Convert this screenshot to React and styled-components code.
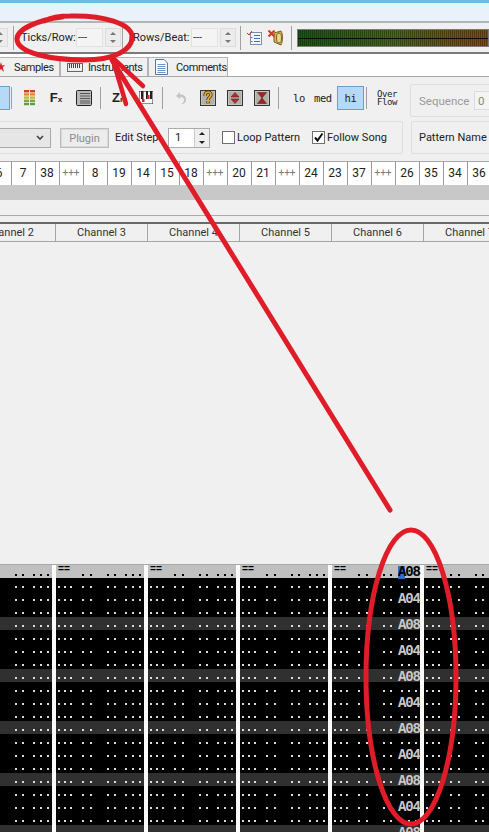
import React from "react";
import styled, { createGlobalStyle } from "styled-components";

const GlobalStyle = createGlobalStyle`
  html, body { margin: 0; padding: 0; background: #f0f0f0; }
  * { box-sizing: border-box; }
`;

const ORDERS = ["6", "7", "38", "+++", "8", "19", "14", "15", "18", "+++", "20", "21", "+++", "24", "23", "37", "+++", "26", "35", "34", "36"];
const CHANNELS = [2, 3, 4, 5, 6, 7];
const ROWS = Array.from({ length: 20 }, (_, i) => i);

const Page = styled.div`
  position: relative;
  width: 489px;
  height: 832px;
  overflow: hidden;
  display: flex;
  flex-direction: column;
  background: #f0f0f0;
  color: #222;
  font-family: Roboto, "Liberation Sans", Arial, sans-serif;
  font-size: 11px;
`;
const TitleStrip = styled.div`
  height: 23px;
  flex: none;
  background: #e9f2fa;
  border-top: 3px solid #6db9e8;
  border-bottom: 2px solid #b4b4b4;
`;
const TopBar = styled.div`
  height: 31px;
  flex: none;
  display: flex;
  align-items: center;
  background: #f0f0f0;
  border-bottom: 2px solid #7a7a7a;
`;
const Sep = styled.div`
  width: 1px;
  height: ${(p) => p.$h || 24}px;
  flex: none;
  margin-left: ${(p) => p.$ml || 0}px;
  background: #a0a0a0;
`;
const Label = styled.div`
  flex: none;
  width: ${(p) => (p.$w ? `${p.$w}px` : "auto")};
  white-space: nowrap;
  margin-left: ${(p) => p.$ml || 0}px;
  color: ${(p) => p.$color || "#222"};
`;
const Field = styled.div`
  width: 27px;
  height: 19px;
  flex: none;
  margin-left: ${(p) => p.$ml || 0}px;
  padding-left: 1px;
  line-height: 18px;
  background: #f4f4f4;
  border: 1px solid #e2e2e2;
  color: #333;
  font-size: 11px;
`;
const Spin = styled.div`
  width: 16px;
  height: 19px;
  flex: none;
  margin-left: ${(p) => p.$ml || 0}px;
  display: flex;
  flex-direction: column;
  justify-content: space-around;
  align-items: center;
  background: #ececec;
  border: 1px solid #dcdcdc;
`;
const Tri = styled.div`
  width: 0;
  height: 0;
  border-left: 3px solid transparent;
  border-right: 3px solid transparent;
  ${(p) => (p.$down ? "border-top: 3px solid #777;" : "border-bottom: 3px solid #777;")}
`;
const Meter = styled.div`
  width: 192px;
  height: 18px;
  flex: none;
  margin-left: 5px;
  background:
    linear-gradient(#0a0a0a, #0a0a0a) 0 8px / 100% 1px no-repeat,
    repeating-linear-gradient(90deg, rgba(0, 0, 0, 0.3) 0 1px, transparent 1px 2px),
    linear-gradient(90deg, #1c5416 0%, #4a661c 50%, #7a4c16 100%);
  border: 1px solid #7c7c7c;
`;
const TabStrip = styled.div`
  height: 23px;
  flex: none;
  display: flex;
  align-items: flex-end;
  margin-left: -10px;
  background: #fff;
  border-bottom: 1px solid #a8a8a8;
`;
const Tab = styled.div`
  height: 19px;
  width: ${(p) => p.$w}px;
  flex: none;
  display: flex;
  align-items: center;
  gap: ${(p) => p.$gap}px;
  padding-left: ${(p) => p.$pl}px;
  background: #f0f0f0;
  border: 1px solid #b4b4b4;
  border-bottom: none;
  white-space: nowrap;
  letter-spacing: -0.4px;
  & svg { flex: none; }
`;
const IconRow = styled.div`
  height: 41px;
  flex: none;
  display: flex;
  align-items: center;
`;
const ActiveStub = styled.div`
  width: 10px;
  height: 24px;
  flex: none;
  background: #b7d8f6;
  border: 1px solid #6c9fcf;
  border-left: none;
`;
const Slot = styled.div`
  flex: none;
  display: flex;
  justify-content: center;
  align-items: center;
  width: ${(p) => p.$w}px;
  margin-left: ${(p) => p.$ml || 0}px;
`;
const FxText = styled.div`
  font: bold 13px "Liberation Sans", Arial, sans-serif;
  color: #222;
  white-space: nowrap;
  & small { font-size: 8px; }
`;
const ModeText = styled.div`
  flex: none;
  width: ${(p) => p.$w}px;
  margin-left: ${(p) => p.$ml || 0}px;
  font: 10.500px "DejaVu Sans Mono", monospace;
  letter-spacing: -0.4px;
  color: #222;
`;
const ModeOn = styled(ModeText)`
  height: 24px;
  line-height: 22px;
  text-align: center;
  background: #b7d8f6;
  border: 1px solid #6c9fcf;
`;
const OverFlow = styled.div`
  flex: none;
  width: 20px;
  margin-left: 10px;
  font: 9px/8px "DejaVu Sans Mono", monospace;
  letter-spacing: -0.4px;
  color: #222;
`;
const GroupBox = styled.div`
  flex: none;
  height: 33px;
  display: flex;
  align-items: center;
  border: 1px solid #dedede;
  border-radius: 2px;
  overflow: hidden;
`;
const SequenceBox = styled(GroupBox)`
  width: 90px;
  margin-left: 13px;
  padding-left: 8px;
  align-self: flex-end;
  margin-bottom: 1px;
  font-size: 11.500px;
`;
const SeqValue = styled.div`
  width: 20px;
  height: 19px;
  flex: none;
  margin-left: 9px;
  padding-left: 3px;
  line-height: 18px;
  color: #888;
  background: #f4f4f4;
  border: 1px solid #dcdcdc;
`;
const PatternRow = styled.div`
  height: 39px;
  flex: none;
  display: flex;
  align-items: center;
  gap: 8px;
  margin-left: -6px;
`;
const SettingsBox = styled(GroupBox)`
  width: 409px;
  padding-left: 5px;
`;
const NameBox = styled(GroupBox)`
  width: 90px;
  padding-left: 7px;
`;
const Select = styled.div`
  width: 51px;
  height: 20px;
  flex: none;
  display: flex;
  justify-content: flex-end;
  align-items: center;
  padding-right: 6px;
  background: #e6e6e6;
  border: 1px solid #a9a9a9;
  border-left: none;
`;
const PluginButton = styled.div`
  width: 49px;
  height: 20px;
  flex: none;
  margin-left: 9px;
  line-height: 18px;
  text-align: center;
  color: #8c8c8c;
  background: #ececec;
  border: 2px solid #d9d9d9;
  outline: 1px solid #bdbdbd;
  outline-offset: -1px;
`;
const StepBox = styled.div`
  width: 42px;
  height: 20px;
  flex: none;
  margin-left: 10px;
  display: flex;
  align-items: center;
  justify-content: space-between;
  padding-left: 6px;
  background: #fff;
  border: 1px solid #acacac;
`;
const StepSpin = styled.div`
  width: 15px;
  height: 18px;
  display: flex;
  flex-direction: column;
  justify-content: space-around;
  align-items: center;
  background: #eee;
  border-left: 1px solid #ccc;
`;
const DarkTri = styled(Tri)`
  border-bottom-color: #222;
  border-top-color: #222;
`;
const CheckBox = styled.div`
  width: 13px;
  height: 13px;
  flex: none;
  display: flex;
  margin-left: ${(p) => p.$ml}px;
  background: #fff;
  border: 1px solid #707070;
`;
const OrderBar = styled.div`
  height: 24px;
  flex: none;
  display: flex;
  margin: 4px 0 0 -12px;
  background: #fff;
  border-top: 1px solid #a8a8a8;
`;
const OrderCell = styled.div`
  width: 24px;
  flex: none;
  padding-right: 1px;
  text-align: center;
  line-height: 22px;
  font-size: ${(p) => (p.$sep ? 10 : 12)}px;
  color: ${(p) => (p.$sep ? "#777" : "#222")};
  border-right: 1px solid #9a9a9a;
`;
const OrderScroll = styled.div`
  height: 15px;
  flex: none;
  background: #c8c8c8;
`;
const Divider = styled.div`
  height: 9px;
  flex: none;
  margin-top: 15px;
  border-top: 1px solid #acacac;
  border-bottom: 2px solid #696969;
`;
const ChannelBar = styled.div`
  height: 18px;
  flex: none;
  display: flex;
  margin-left: -36px;
`;
const ChannelButton = styled.div`
  width: 92px;
  flex: none;
  text-align: center;
  line-height: 17px;
  color: #333;
  background: #f0f0f0;
  border-right: 1px solid #a5a5a5;
  border-bottom: 1px solid #a5a5a5;
`;
const Blank = styled.div`
  flex: 1;
`;
const Tracker = styled.div`
  height: 268px;
  flex: none;
  display: flex;
  margin-left: -36px;
  border-top: 1px solid #a8a8a8;
  background: #000;
`;
const Channel = styled.div`
  width: 92px;
  flex: none;
  border-right: 4px solid #fbfbfb;
  box-shadow: inset -1px 0 0 #bbb;
`;
const Row = styled.div`
  height: 13px;
  display: grid;
  grid-template-columns: 24px 25px 18px 1fr;
  padding: ${(p) => (p.$head ? 9 : 8)}px 0 0 2px;
  background: ${(p) => (p.$head ? "#c0c0c0" : p.$light ? "#303030" : "#000")};
  color: ${(p) => (p.$head ? "#000" : "#dcdcdc")};
`;
const DotGroup = styled.div`
  display: flex;
  gap: ${(p) => p.$gap}px;
  height: 2px;
`;
const Dot = styled.span`
  width: 2px;
  height: 2px;
  flex: none;
  background: currentColor;
`;
const HeadMark = styled.div`
  font: bold 10px/10px "Liberation Mono", monospace;
  height: 2px;
  margin-top: -9px;
  color: #000;
`;
const EffectText = styled.div`
  height: 13px;
  margin: ${(p) => (p.$head ? -8 : -6)}px 0 0 -3px;
  font: bold 14px/13px "Liberation Mono", monospace;
  letter-spacing: -1.1px;
  white-space: nowrap;
  color: ${(p) => (p.$head ? "#000" : "#c9c9c9")};
`;
const Cursor = styled.span`
  display: inline-block;
  height: 13px;
  line-height: 13px;
  background: #2b6fd0;
`;
const Overlay = styled.svg`
  position: absolute;
  left: 0;
  top: 0;
  pointer-events: none;
`;

function Spinner({ ml }) {
  return (
    <Spin $ml={ml}>
      <Tri />
      <Tri $down />
    </Spin>
  );
}

function LevelIcon() {
  const cols = ["#c8402c", "#e08a2c", "#c8b83c", "#7aa83c", "#58a048"];
  return (
    <svg width="11" height="16" viewBox="0 0 11 16">
      {cols.map((c, i) => (
        <g key={c} fill={c}>
          <rect x="0" y={i * 3.2} width="5" height="2.4" />
          <rect x="6" y={i * 3.2} width="5" height="2.4" />
        </g>
      ))}
    </svg>
  );
}

function ListIcon() {
  return (
    <svg width="16" height="16" viewBox="0 0 16 16">
      <rect x="0.5" y="0.5" width="15" height="15" rx="1" fill="#b9b9b9" stroke="#222" />
      <path d="M4 3.5H14M4 6H14M4 8.5H14M4 11H14M4 13H14" stroke="#555" />
    </svg>
  );
}

function PianoIcon() {
  return (
    <svg width="14" height="13" viewBox="0 0 14 13">
      <rect width="14" height="13" fill="#fff" stroke="#222" />
      <path d="M2 0h2.5v8H2zM7 0h2v8H7zM11 0h2v8h-2z" fill="#222" />
      <path d="M3 8h2.5v3H3zM8 4h2.5v4H8z" fill="#d02030" />
    </svg>
  );
}

function UndoIcon() {
  return (
    <svg width="12" height="14" viewBox="0 0 12 14">
      <path d="M5 1 1 5l4 3V6c3 0 4 1 4 3s-1 3-3 4c4 0 5-2 5-5S8 3 5 3.500z" fill="#c4c4c4" />
    </svg>
  );
}

function BoxIcon({ children }) {
  return (
    <svg width="16" height="16" viewBox="0 0 16 16">
      <rect x="0.5" y="0.5" width="15" height="15" fill="#c4c4bc" stroke="#333" />
      <path d="M2 3H14M2 5H14M2 7H14M2 9H14M2 11H14M2 13H14" stroke="#9c9c94" />
      {children}
    </svg>
  );
}

function OptionsIcon() {
  return (
    <svg width="15" height="14" viewBox="0 0 15 14">
      <rect x="3.500" y="1.500" width="11" height="12" fill="#f4f6fb" stroke="#7c8fa8" />
      <path d="M7 4.500H13M7 7.500H13M7 10.500H13" stroke="#3f6fb0" />
      <path d="M0 2l2 2 3-4" stroke="#c03020" fill="none" />
      <path d="M4 6.500h1.500M4 10.500h1.500" stroke="#c05a20" />
    </svg>
  );
}

function SpeakerIcon() {
  return (
    <svg width="15" height="16" viewBox="0 0 15 16">
      <path d="M6 3 13 1c2 3 2 10 0 14L6 12z" fill="#d8b64c" stroke="#75602a" />
      <ellipse cx="11" cy="8" rx="2.500" ry="5" fill="#ecd88c" stroke="#75602a" />
      <path d="M0.500 0.500 6.500 6.500M6.500 0.500 0.500 6.500" stroke="#d23a22" strokeWidth="2" />
    </svg>
  );
}

function StarIcon() {
  return (
    <svg width="8" height="10" viewBox="0 0 8 10">
      <path d="M4 0 5 3.500 8 3 5.800 5.500 7 10 4 7 1 10 2.200 5.500 0 3 3 3.500z" fill="#d8202c" />
    </svg>
  );
}

function KeysIcon() {
  return (
    <svg width="16" height="9" viewBox="0 0 16 9">
      <rect x="0.500" y="0.500" width="15" height="8" fill="#eee" stroke="#666" />
      <path d="M2.500 1v4M4.500 1v4M6.500 1v4M8.500 1v4M10.500 1v4M12.500 1v4" stroke="#444" />
    </svg>
  );
}

function DocIcon() {
  return (
    <svg width="13" height="16" viewBox="0 0 13 16">
      <path d="M0.500 0.500H9L12.500 4V15.500H0.500z" fill="#fbfcfe" stroke="#5878a8" />
      <path d="M2.500 5.500H10.500M2.500 7.500H10.500M2.500 9.500H10.500M2.500 11.500H10.500M2.500 13.500H10.500" stroke="#6f94c8" />
    </svg>
  );
}

function TrackerChannel({ index }) {
  const effect = index === 4;
  return (
    <Channel>
      <Row $head>
        {index > 0 ? <HeadMark>==</HeadMark> : <DotGroup $gap={4} />}
        <DotGroup $gap={6}><Dot /><Dot /></DotGroup>
        <DotGroup $gap={5}><Dot /><Dot /></DotGroup>
        {effect ? (
          <EffectText $head><Cursor>A</Cursor>08</EffectText>
        ) : (
          <DotGroup $gap={5}><Dot /><Dot /><Dot /></DotGroup>
        )}
      </Row>
      {ROWS.map((r) => (
        <Row key={r} $light={r % 4 === 3}>
          <DotGroup $gap={4}><Dot /><Dot /><Dot /></DotGroup>
          <DotGroup $gap={6}><Dot /><Dot /></DotGroup>
          <DotGroup $gap={5}><Dot /><Dot /></DotGroup>
          {effect && r % 2 === 1 ? (
            <EffectText>{r % 4 === 1 ? "A04" : "A08"}</EffectText>
          ) : (
            <DotGroup $gap={5}><Dot /><Dot /><Dot /></DotGroup>
          )}
        </Row>
      ))}
    </Channel>
  );
}

export default function App() {
  return (
    <Page>
      <GlobalStyle />
      <TitleStrip />
      <TopBar>
        <Spinner ml={-8} />
        <Sep $ml={5} />
        <Label $ml={7} $w={54}>Ticks/Row:</Label>
        <Field $ml={1}>---</Field>
        <Spinner ml={2} />
        <Sep $ml={1} />
        <Label $ml={10} $w={56}>Rows/Beat:</Label>
        <Field $ml={2}>---</Field>
        <Spinner ml={2} />
        <Sep $ml={4} />
        <Slot $w={15} $ml={6}><OptionsIcon /></Slot>
        <Slot $w={15} $ml={6}><SpeakerIcon /></Slot>
        <Sep $ml={8} />
        <Meter />
      </TopBar>
      <TabStrip>
        <Tab $w={70} $pl={6} $gap={9}><StarIcon />Samples</Tab>
        <Tab $w={88} $pl={6} $gap={5}><KeysIcon />Instruments</Tab>
        <Tab $w={80} $pl={6} $gap={8}><DocIcon />Comments</Tab>
      </TabStrip>
      <IconRow>
        <ActiveStub />
        <Sep $ml={1} $h={22} />
        <Slot $w={11} $ml={12}><LevelIcon /></Slot>
        <Slot $w={12} $ml={15}><FxText>F<small>x</small></FxText></Slot>
        <Slot $w={16} $ml={14}><ListIcon /></Slot>
        <Sep $ml={8} $h={22} />
        <Slot $w={15} $ml={11}><FxText>Z<small>m</small></FxText></Slot>
        <Slot $w={14} $ml={12}><PianoIcon /></Slot>
        <Sep $ml={9} $h={22} />
        <Slot $w={12} $ml={12}><UndoIcon /></Slot>
        <Slot $w={16} $ml={13}>
          <BoxIcon>
            <path d="M5 6c0-5 6-5 6-1 0 2-3 2-3 5M8 11v2.500" fill="none" stroke="#3a3020" strokeWidth="3.200" />
            <path d="M5 6c0-5 6-5 6-1 0 2-3 2-3 5M8 11v2.500" fill="none" stroke="#eaa818" strokeWidth="1.800" />
          </BoxIcon>
        </Slot>
        <Slot $w={16} $ml={11}>
          <BoxIcon><path d="M8 2.500 12 7H4zM8 13.500 4 9h8z" fill="#c02828" stroke="#402020" strokeWidth="0.500" /></BoxIcon>
        </Slot>
        <Slot $w={16} $ml={11}>
          <BoxIcon><path d="M3.500 2.500h9L8 8zM3.500 13.500h9L8 8z" fill="#a82020" stroke="#402020" strokeWidth="0.500" /></BoxIcon>
        </Slot>
        <Sep $ml={8} $h={22} />
        <ModeText $ml={14} $w={8}>lo</ModeText>
        <ModeText $ml={13} $w={17}>med</ModeText>
        <ModeOn $ml={6} $w={27}>hi</ModeOn>
        <Sep $ml={2} $h={22} />
        <OverFlow>Over Flow</OverFlow>
        <SequenceBox>
          <Label $color="#9a9a9a" $w={46}>Sequence</Label>
          <SeqValue>0</SeqValue>
        </SequenceBox>
      </IconRow>
      <PatternRow>
        <SettingsBox>
          <Select>
            <svg width="8" height="6" viewBox="0 0 8 6"><path d="M1 1 4 4 7 1" fill="none" stroke="#444" strokeWidth="1.600" /></svg>
          </Select>
          <PluginButton>Plugin</PluginButton>
          <Label $ml={6} $w={43}>Edit Step</Label>
          <StepBox>
            1
            <StepSpin><DarkTri /><DarkTri $down /></StepSpin>
          </StepBox>
          <CheckBox $ml={12} />
          <Label $ml={2} $w={62}>Loop Pattern</Label>
          <CheckBox $ml={13}>
            <svg width="11" height="11" viewBox="0 0 11 11"><path d="M2 5.500 4.500 8.500 9.500 1.500" fill="none" stroke="#111" strokeWidth="2" /></svg>
          </CheckBox>
          <Label $ml={2} $w={57}>Follow Song</Label>
        </SettingsBox>
        <NameBox>
          <Label>Pattern Name</Label>
        </NameBox>
      </PatternRow>
      <OrderBar>
        {ORDERS.map((o, i) => (
          <OrderCell key={i} $sep={o === "+++"}>{o}</OrderCell>
        ))}
      </OrderBar>
      <OrderScroll />
      <Divider />
      <ChannelBar>
        {CHANNELS.map((c) => (
          <ChannelButton key={c}>Channel {c}</ChannelButton>
        ))}
      </ChannelBar>
      <Blank />
      <Tracker>
        {CHANNELS.map((c, i) => (
          <TrackerChannel key={c} index={i} />
        ))}
      </Tracker>
      <Overlay width="489" height="832" viewBox="0 0 489 832">
        <g fill="none" stroke="#e01c28" strokeLinecap="round" strokeLinejoin="round">
          <path strokeWidth="5" d="M62 17C38 20 17 29 17 39C17 53 52 60 84 60C114 60 133 50 132 36C131 24 104 15 70 16C60 16 50 18 44 21" />
          <path strokeWidth="5" d="M390 510L112 60" />
          <path strokeWidth="4.500" d="M113 60L126 104M115 60L143 86" />
          <ellipse strokeWidth="5" cx="411" cy="677" rx="45" ry="147" />
        </g>
      </Overlay>
    </Page>
  );
}
